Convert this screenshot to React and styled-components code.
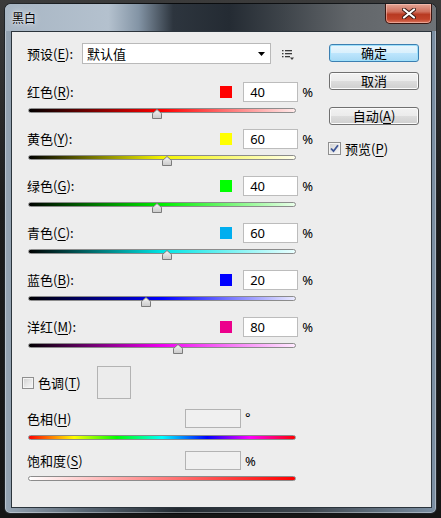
import React from "react";
import styled, { createGlobalStyle } from "styled-components";

const GlobalStyle = createGlobalStyle`
  html, body {
    margin: 0;
    padding: 0;
  }
  body {
    background: linear-gradient(to bottom, #3b3b3b 0%, #1c1c1c 40%, #161616 100%);
    font-family: "Noto Sans", "Noto Sans CJK SC", sans-serif;
    font-size: 13px;
    color: #000;
  }
`;

const channels = [
  { name: "红色", key: "R", value: 40, swatch: "#ff0000", color: "#ff0000", tint: "#ffeaea" },
  { name: "黄色", key: "Y", value: 60, swatch: "#ffff00", color: "#f4f400", tint: "#ffffea" },
  { name: "绿色", key: "G", value: 40, swatch: "#00ff00", color: "#00ee00", tint: "#eaffea" },
  { name: "青色", key: "C", value: 60, swatch: "#00aeef", color: "#00e4e4", tint: "#eaffff" },
  { name: "蓝色", key: "B", value: 20, swatch: "#0000ff", color: "#0000ff", tint: "#eaeaff" },
  { name: "洋红", key: "M", value: 80, swatch: "#ec008c", color: "#f000f0", tint: "#ffeaff" },
];

const Desktop = styled.div`
  padding: 3px 4px 4px 4px;
`;

const Window = styled.div`
  box-sizing: border-box;
  width: 433px;
  height: 511px;
  display: flex;
  flex-direction: column;
  padding: 0 4px 5px 6px;
  border: 1px solid rgba(0, 0, 0, 0.75);
  border-radius: 7px 7px 6px 6px;
  background: linear-gradient(to right, #95a4b3 0%, #55626f 20%, #232a31 40%, #3e464e 70%, #7b8fa3 100%);
  box-shadow: inset 0 0 0 1px rgba(255, 255, 255, 0.35);
`;

const TitleBar = styled.div`
  height: 27px;
  margin: 0 -4px 0 -6px;
  padding: 0 4px 0 7px;
  display: flex;
  align-items: center;
  border-radius: 6px 6px 0 0;
  background: linear-gradient(
    to right,
    #a8b6c4 0%,
    #b4c1ce 24%,
    #8394a5 31%,
    #2d353e 39%,
    #242b33 52%,
    #3f454b 65%,
    #62666a 80%,
    #6e7276 100%
  );
`;

const Title = styled.span`
  flex: 1;
  font-family: "Noto Sans CJK SC", sans-serif;
  font-size: 12px;
  line-height: 14px;
  color: #000;
  text-shadow: 0 0 6px rgba(255, 255, 255, 0.9), 0 0 2px rgba(255, 255, 255, 0.9);
`;

const CloseButton = styled.div`
  align-self: flex-start;
  width: 47px;
  height: 20px;
  box-sizing: border-box;
  display: flex;
  align-items: center;
  justify-content: center;
  border: 1px solid #3a1510;
  border-top: none;
  border-radius: 0 0 5px 5px;
  background: linear-gradient(to bottom, #e3a495 0%, #d0715e 40%, #b83a22 55%, #c2432a 80%, #d9785f 100%);
  box-shadow: inset 0 0 0 1px rgba(255, 210, 200, 0.5);
`;

const Client = styled.div`
  flex: 1;
  border: 1px solid #2b343c;
  background: #ededed;
  padding: 11px 0 0 15px;
  display: grid;
  grid-template-columns: 286px 90px;
  column-gap: 16px;
  align-items: start;
`;

const LeftColumn = styled.div`
  display: flex;
  flex-direction: column;
`;

const RightColumn = styled.div`
  display: flex;
  flex-direction: column;
  margin-top: 1px;
`;

const Label = styled.span`
  font-family: "Noto Sans CJK SC", sans-serif;
  font-size: 13px;
  line-height: 16px;
  white-space: nowrap;
  width: ${(p) => p.$width || "auto"};
  flex: ${(p) => (p.$grow ? 1 : "none")};
`;

const Key = styled.span`
  text-decoration: underline;
  text-underline-offset: 2px;
`;

const PresetRow = styled.div`
  display: flex;
  align-items: center;
  height: 21px;
`;

const Select = styled.div`
  box-sizing: border-box;
  width: 189px;
  height: 21px;
  display: flex;
  align-items: center;
  justify-content: space-between;
  padding: 0 5px 0 4px;
  border: 1px solid #b9b9b9;
  background: #fff;
`;

const MenuIcon = styled.svg`
  margin-left: 11px;
  margin-top: 2px;
`;

const ChannelBlock = styled.div`
  margin-top: ${(p) => (p.$first ? "18px" : "16px")};
`;

const LabelRow = styled.div`
  display: flex;
  align-items: center;
  height: ${(p) => p.$height || "20px"};
`;

const Swatch = styled.div`
  width: 12px;
  height: 12px;
  margin-right: 11px;
  background: ${(p) => p.$color};
`;

const NumberInput = styled.input`
  box-sizing: border-box;
  width: ${(p) => p.$width || "55px"};
  height: ${(p) => p.$height || "20px"};
  padding: 0 0 0 6px;
  margin: 0;
  border: 1px solid ${(p) => (p.disabled ? "#b3b3b3" : "#bcbcbc")};
  border-radius: 0;
  background: ${(p) => (p.disabled ? "#f0f0f0" : "#fff")};
  font-family: "Noto Sans", sans-serif;
  font-size: 13px;
  color: #000;
  outline: none;
`;

const Unit = styled.span`
  margin-left: 4px;
  font-family: "Noto Sans", sans-serif;
  font-size: 13px;
  line-height: 16px;
  align-self: ${(p) => (p.$raised ? "flex-start" : "center")};
`;

const Track = styled.div`
  position: relative;
  box-sizing: border-box;
  width: 268px;
  height: 5px;
  margin: ${(p) => p.$gap || "6px"} 0 0 1px;
  border: 1px solid #8c8c8c;
  border-radius: 3px;
  background: ${(p) => p.$gradient};
`;

const Thumb = styled.svg`
  position: absolute;
  top: 0;
  transform: translateX(-50%);
`;

const ToneRow = styled.div`
  display: flex;
  align-items: center;
  height: 33px;
  margin: 18px 0 0 -5px;
`;

const CheckBox = styled.div`
  box-sizing: border-box;
  width: ${(p) => p.$size}px;
  height: ${(p) => p.$size}px;
  border: 1px solid #8f8f8f;
  background: linear-gradient(135deg, #cfcfcf 0%, #e6e6e6 50%, #f8f8f8 100%);
  box-shadow: inset 0 0 0 1px #f4f4f4;
  display: flex;
  align-items: center;
  justify-content: center;
  margin-right: 4px;
`;

const ToneSwatch = styled.div`
  box-sizing: border-box;
  width: 34px;
  height: 33px;
  border: 1px solid #b3b3b3;
  background: #ececec;
`;

const DialogButton = styled.div`
  box-sizing: border-box;
  height: 18px;
  width: 90px;
  margin-top: ${(p) => p.$gap || "0"};
  display: flex;
  align-items: center;
  justify-content: center;
  border: 1px solid ${(p) => (p.$primary ? "#3c7fb1" : "#707070")};
  border-radius: 3px;
  background: ${(p) =>
    p.$primary
      ? "linear-gradient(to bottom, #eaf6fd 0%, #d9f0fc 50%, #bee6fd 51%, #a7d9f5 100%)"
      : "linear-gradient(to bottom, #f2f2f2 0%, #ebebeb 50%, #dddddd 51%, #cfcfcf 100%)"};
  box-shadow: inset 0 0 0 1px ${(p) => (p.$primary ? "#9fe0fb" : "#fbfbfb")};
  font-family: "Noto Sans CJK SC", sans-serif;
  font-size: 13px;
  line-height: 16px;
`;

const PreviewRow = styled.div`
  display: flex;
  align-items: center;
  height: 13px;
  margin: 17px 0 0 -1px;
`;

const Arrow = () => (
  <svg width="7" height="4" viewBox="0 0 7 4">
    <path d="M0 0 H7 L3.5 4 Z" fill="#000" />
  </svg>
);

const ThumbShape = ({ value }) => (
  <Thumb width="10" height="10" viewBox="0 0 10 10" style={{ left: `${((value + 200) / 500) * 100}%` }}>
    <defs>
      <linearGradient id="thumbFill" x1="0" y1="0" x2="0" y2="1">
        <stop offset="0" stopColor="#f4f4f4" />
        <stop offset="1" stopColor="#c9c9c9" />
      </linearGradient>
    </defs>
    <path d="M5 0.5 L9.5 4.5 V9.5 H0.5 V4.5 Z" fill="url(#thumbFill)" stroke="#7b7b7b" strokeWidth="1" />
  </Thumb>
);

const channelGradient = (c) => `linear-gradient(to right, #000 0%, ${c.color} 50%, ${c.tint} 100%)`;

const hueGradient =
  "linear-gradient(to right, #ff0000 0%, #ffff00 17%, #00ff00 33%, #00ffff 50%, #0000ff 67%, #ff00ff 83%, #ff0000 100%)";
const satGradient = "linear-gradient(to right, #ffffff 0%, #ff0000 100%)";

export default function App() {
  return (
    <>
      <GlobalStyle />
      <Desktop>
        <Window>
          <TitleBar>
            <Title>黑白</Title>
            <CloseButton>
              <svg width="14" height="11" viewBox="0 0 14 11">
                <path d="M2 1.5 L12 9.5 M12 1.5 L2 9.5" stroke="#3a1a14" strokeWidth="4" strokeLinecap="round" />
                <path d="M2 1.5 L12 9.5 M12 1.5 L2 9.5" stroke="#ffffff" strokeWidth="2.2" strokeLinecap="round" />
              </svg>
            </CloseButton>
          </TitleBar>
          <Client>
            <LeftColumn>
              <PresetRow>
                <Label $width="55px">
                  预设(<Key>E</Key>):
                </Label>
                <Select>
                  <Label>默认值</Label>
                  <Arrow />
                </Select>
                <MenuIcon width="12" height="10" viewBox="0 0 12 10">
                  <g fill="#3c3c3c">
                    <rect x="0" y="0" width="1.5" height="1.3" />
                    <rect x="3" y="0" width="7" height="1.3" />
                    <rect x="0" y="3" width="1.5" height="1.3" />
                    <rect x="3" y="3" width="7" height="1.3" />
                    <rect x="0" y="6" width="1.5" height="1.3" />
                    <rect x="3" y="6" width="5" height="1.3" />
                    <path d="M8 7.5 H12 L10 10 Z" />
                  </g>
                </MenuIcon>
              </PresetRow>

              {channels.map((c, i) => (
                <ChannelBlock key={c.key} $first={i === 0}>
                  <LabelRow>
                    <Label $grow>
                      {c.name}(<Key>{c.key}</Key>):
                    </Label>
                    <Swatch $color={c.swatch} />
                    <NumberInput readOnly value={c.value} />
                    <Unit>%</Unit>
                  </LabelRow>
                  <Track $gradient={channelGradient(c)}>
                    <ThumbShape value={c.value} />
                  </Track>
                </ChannelBlock>
              ))}

              <ToneRow>
                <CheckBox $size={12} />
                <Label $width="59px">
                  色调(<Key>T</Key>)
                </Label>
                <ToneSwatch />
              </ToneRow>

              <LabelRow $height="19px" style={{ marginTop: 10 }}>
                <Label $width="158px">
                  色相(<Key>H</Key>)
                </Label>
                <NumberInput disabled readOnly value="" $width="56px" $height="19px" />
                <Unit $raised>°</Unit>
              </LabelRow>
              <Track $gradient={hueGradient} $gap="7px" />

              <LabelRow $height="19px" style={{ marginTop: 11 }}>
                <Label $width="158px">
                  饱和度(<Key>S</Key>)
                </Label>
                <NumberInput disabled readOnly value="" $width="56px" $height="19px" />
                <Unit>%</Unit>
              </LabelRow>
              <Track $gradient={satGradient} $gap="6px" />
            </LeftColumn>

            <RightColumn>
              <DialogButton $primary>确定</DialogButton>
              <DialogButton $gap="10px">取消</DialogButton>
              <DialogButton $gap="17px">
                自动(<Key>A</Key>)
              </DialogButton>
              <PreviewRow>
                <CheckBox $size={13}>
                  <svg width="9" height="9" viewBox="0 0 9 9">
                    <path d="M1 4.5 L3.5 7.2 L8 1.2" fill="none" stroke="#3d5596" strokeWidth="1.8" />
                  </svg>
                </CheckBox>
                <Label>
                  预览(<Key>P</Key>)
                </Label>
              </PreviewRow>
            </RightColumn>
          </Client>
        </Window>
      </Desktop>
    </>
  );
}
